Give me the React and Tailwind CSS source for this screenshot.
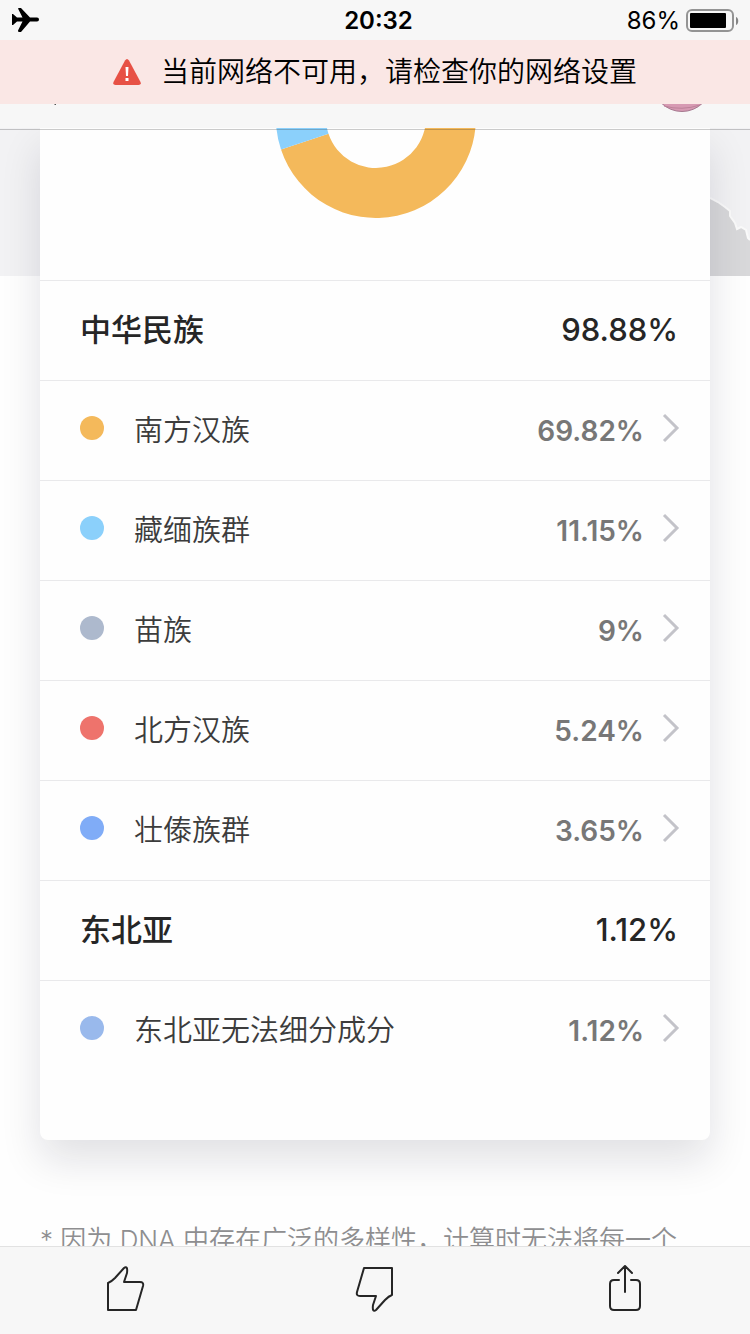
import React from 'react'

const groups = [
    {
        name: '中华民族',
        value: '98.88%',
        items: [
            { name: '南方汉族', value: '69.82%', dot: 'bg-[#f4b95b]' },
            { name: '藏缅族群', value: '11.15%', dot: 'bg-[#8bd0fb]' },
            { name: '苗族', value: '9%', dot: 'bg-[#adb9cd]' },
            { name: '北方汉族', value: '5.24%', dot: 'bg-[#ee736c]' },
            { name: '壮傣族群', value: '3.65%', dot: 'bg-[#80acf7]' },
        ],
    },
    {
        name: '东北亚',
        value: '1.12%',
        items: [{ name: '东北亚无法细分成分', value: '1.12%', dot: 'bg-[#99b9ec]' }],
    },
]

function StatusBar() {
    return (
        <div className="grid h-10 grid-cols-3 items-center pl-3 pr-[11px] pt-0.5 text-2xl leading-none text-black">
            <svg className="h-[26px] w-7" viewBox="0 0 28 26" fill="currentColor" aria-label="飞行模式">
                <path d="M0 6h1l4 3.500h5.500L6 .5Q6 0 7 0h2l9 9.500h7a2 2 0 0 1 0 4h-7L9 24H7q-1 0-1-1.500l4.500-9H5L1 17H0z" />
            </svg>
            <span className="pl-1.5 text-center font-semibold">20:32</span>
            <div className="flex items-center justify-end gap-1.5">
                <span>86%</span>
                <svg className="h-6 w-[53px]" viewBox="0 0 53 24" aria-label="电池">
                    <rect x="1" y="1" width="46" height="21" rx="5" fill="none" stroke="#949494" strokeWidth="2" />
                    <rect x="4" y="4" width="36" height="15" rx="1" />
                    <path d="M50 8c3 1 3 7 0 8z" fill="#858585" />
                </svg>
            </div>
        </div>
    )
}

function NetworkAlert() {
    return (
        <div role="alert" className="flex h-16 items-center justify-center gap-5 bg-[#fae7e5] text-[28px] font-[350] text-black">
            <svg className="h-[26px] w-7" viewBox="0 0 28 26">
                <path d="M12 1.500q2-3 4 0l11.500 21.500q1 3-2 3h-23q-3 0-2-3z" fill="#e75145" />
                <path d="M12.500 8h3l-.5 9h-2zM12.500 19h3v3h-3z" fill="#fff" />
            </svg>
            <span>当前网络不可用，请检查你的网络设置</span>
        </div>
    )
}

function NavBar() {
    return (
        <div className="flex h-6 items-start justify-between pl-[54px] pr-[38px]">
            <svg className="h-px w-0.5" viewBox="0 0 2 1">
                <path d="M0 0h2v1H1z" fill="#555" />
            </svg>
            <svg className="h-2 w-[60px]" viewBox="0 52 60 8">
                <circle cx="30" cy="30" r="29.500" fill="#d79ab3" stroke="#a5788f" />
                <path d="M12 54q18 5 36-1" fill="none" stroke="#bd8199" />
            </svg>
        </div>
    )
}

function Donut() {
    return (
        <svg className="h-[90px] w-[200px]" viewBox="-100 10 200 90">
            <path d="M0-100A100 100 0 1 1-95 31.500L-47.500 15.700A50 50 0 1 0 0-50z" fill="#f4b95b" />
            <path d="M-95 31.500A100 100 0 0 1-94-34L-47-17A50 50 0 0 0-47.500 15.700z" fill="#8bd0fb" />
        </svg>
    )
}

function Row({ item }) {
    return (
        <li className="border-t border-[#e9e9eb]">
            <button className="flex h-[99px] w-full items-center pl-10 pr-[30px] pb-[5px]">
                <span className={`size-6 rounded-full ${item.dot}`} />
                <span className="ml-[30px] pt-1.5 text-[29px] font-[350] text-[#3c3c3c]">{item.name}</span>
                <span className="ml-auto pt-1.5 text-[28px] font-semibold text-[#777]">{item.value}</span>
                <svg className="ml-[18px] h-[30px] w-[18px]" viewBox="0 0 18 30" fill="none" stroke="#c3c3c9" strokeWidth="3">
                    <path d="M2 2l13 13L2 28" />
                </svg>
            </button>
        </li>
    )
}

function ToolButton({ label, children }) {
    return (
        <button aria-label={label} className="flex flex-1 items-center justify-center pb-[3px]">
            <svg className="size-12" viewBox="0 0 48 48" fill="none" stroke="#262626" strokeWidth="2" strokeLinecap="round" strokeLinejoin="round">
                {children}
            </svg>
        </button>
    )
}

export default function App() {
    return (
        <div className="flex h-screen flex-col overflow-hidden bg-[#fefefe] font-['Inter','Noto_Sans_CJK_SC',sans-serif]">
            <header className="shrink-0 bg-[#f7f7f7]">
                <StatusBar />
                <NetworkAlert />
                <NavBar />
            </header>

            <main className="relative flex-1 overflow-hidden">
                <div className="absolute inset-x-0 top-0 flex h-[148px] justify-end bg-[#f2f2f4]">
                    <svg className="h-[148px] w-10" viewBox="0 0 40 148">
                        <path d="M0 70l8 4 7 5 5 4v5l5 7 2 6 4-2 5 3 2 8 2 2v36H0z" fill="#d8d8da" />
                        <path d="M0 70l8 4 7 5 5 4v5l5 7 2 6 4-2 5 3 2 8 2 2" fill="none" stroke="#fafafa" strokeWidth="2" />
                    </svg>
                </div>
                <div className="absolute inset-x-0 top-px z-10 h-px bg-black/20" />

                <section className="relative mx-10 rounded-b-lg bg-[#fefefe] pb-[60px] shadow-[0_20px_40px_rgba(20,20,40,0.12)]">
                    <div className="flex h-[152px] justify-center pl-0.5">
                        <Donut />
                    </div>
                    {groups.map(group => (
                        <div key={group.name}>
                            <h2 className="flex h-[100px] items-center justify-between border-t border-[#e9e9eb] pl-10 pr-8 text-[31px] font-medium text-[#262626]">
                                <span>{group.name}</span>
                                <span>{group.value}</span>
                            </h2>
                            <ul>
                                {group.items.map(item => <Row key={item.name} item={item} />)}
                            </ul>
                        </div>
                    ))}
                </section>

                <p className="relative mx-10 mt-20 whitespace-nowrap text-[26px] font-[350] leading-10 text-[#8e8e90]">
                    * 因为 DNA 中存在广泛的多样性，计算时无法将每一个
                </p>
            </main>

            <footer className="flex h-[88px] shrink-0 border-t border-[#e2e2e2] bg-[#f7f7f7]">
                <ToolButton label="赞">
                    <path d="M7 18v27h28l7-24q1-4-3-4H23l3-9q1-8-3-5L14 13q-4 4-7 5z" />
                </ToolButton>
                <ToolButton label="踩">
                    <path d="M41 30V3H13L6 27q-1 4 3 4h16l-3 9q-1 8 3 5l9-10q4-4 7-5z" />
                </ToolButton>
                <ToolButton label="分享">
                    <path d="M18 15h-5q-4 0-4 4v22q0 4 4 4h22q4 0 4-4V19q0-4-4-4h-5M24 27V1M17 8l7-7 7 7" />
                </ToolButton>
            </footer>
        </div>
    )
}
